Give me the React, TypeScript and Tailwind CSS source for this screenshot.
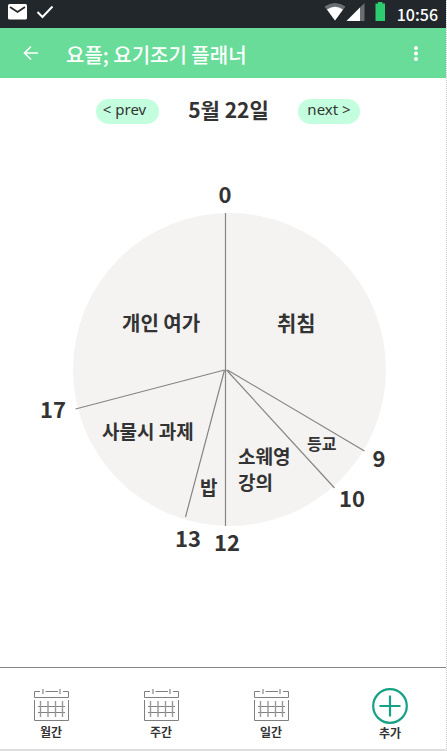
import React from "react";

const spokes = [
  { hour: "0", x: 189, y: 33, fromX: 189, tx: 189, ty: 23 },
  { hour: "9", x: 328, y: 271, fromX: 191, tx: 343, ty: 287 },
  { hour: "10", x: 298, y: 308, fromX: 190, tx: 316, ty: 327 },
  { hour: "12", x: 189, y: 346, fromX: 189, tx: 191, ty: 371 },
  { hour: "13", x: 149, y: 337, fromX: 188, tx: 152, ty: 367 },
  { hour: "17", x: 39, y: 229, fromX: 188, tx: 17, ty: 238 },
];

const plans = [
  { lines: ["취침"], x: 241, y: 151, size: "text-[21px]" },
  { lines: ["등교"], x: 271, y: 270, size: "text-[16px]" },
  { lines: ["소웨영", "강의"], x: 202, y: 284, size: "text-[19px]" },
  { lines: ["밥"], x: 164, y: 315, size: "text-[19px]" },
  { lines: ["사물시 과제"], x: 66, y: 259, size: "text-[19px]" },
  { lines: ["개인 여가"], x: 86, y: 151, size: "text-[20px]" },
];

function DayChart() {
  return (
    <svg viewBox="0 0 375 376" className="block w-[375px] max-w-full overflow-visible fill-[#333333]" role="img" aria-label="5월 22일 시간표">
      <circle cx="193.5" cy="189.5" r="156.5" fill="#f4f3f2" />
      {spokes.map((s) => (
        <line key={s.hour} x1={s.fromX + 0.5} y1="190" x2={s.x + 0.5} y2={s.y} stroke="#858585" strokeWidth="1.2" />
      ))}
      {spokes.map((s) => (
        <text key={s.hour} x={s.tx} y={s.ty} textAnchor="middle" className="text-[22px] font-bold">
          {s.hour}
        </text>
      ))}
      {plans.map((p) =>
        p.lines.map((line, i) => (
          <text key={line} x={p.x} y={p.y + i * 26} className={`${p.size} font-bold`}>
            {line}
          </text>
        )),
      )}
    </svg>
  );
}

function CalendarIcon() {
  return (
    <svg viewBox="0 0 36 33" className="h-[33px] w-9" fill="none" stroke="#808080" strokeWidth="1" aria-hidden="true">
      <path d="M6 3.5H0.5V9.5H34.5V3.5H29M11.5 3.5H24" />
      <path d="M9 1V6M26 1V6" strokeWidth="1.4" stroke="#999999" />
      <path d="M0.5 12V32.5H34.5V12" />
      <path d="M4 18.5H31M4 24.5H31" />
      <path d="M6.5 13V29M14 13V29M21.5 13V29M28.5 13V29" strokeWidth="1.4" stroke="#999999" />
    </svg>
  );
}

function AddIcon() {
  return (
    <svg viewBox="0 0 36 36" className="h-9 w-9" fill="none" stroke="#16a085" aria-hidden="true">
      <circle cx="18" cy="18" r="16.8" strokeWidth="2.2" />
      <path d="M18 7.5V28.5M7.5 18H28.5" strokeWidth="2.2" />
    </svg>
  );
}

function StatusBar() {
  return (
    <div className="flex h-7 items-center bg-[#22272b] px-2 text-white">
      <svg viewBox="0 0 48 20" className="h-5 w-12" role="img" aria-label="알림">
        <rect x="0" y="0" width="19" height="15.5" rx="1.5" fill="#fff" />
        <path d="M2 3L9.5 8L17 3" fill="none" stroke="#22272b" strokeWidth="1.8" />
        <path d="M29.5 8L34.5 13L44.5 2.5" fill="none" stroke="#fff" strokeWidth="2" />
      </svg>
      <svg viewBox="0 -4 64 28" className="ml-auto h-7 w-16" role="img" aria-label="와이파이, 신호, 배터리">
        <path d="M0.5 2.5Q11 -4.5 21.5 2.5L11 16.5Z" fill="#6b6f72" />
        <path d="M3 5.5Q11 0 19 5.5L11 16.5Z" fill="#fff" />
        <path d="M40.5 -1V17H22.5Z" fill="#6b6f72" />
        <path d="M36 3.5V17H22.5Z" fill="#fff" />
        <path d="M54 -2H58.5V-0.5H61V17H51.5V-0.5H54Z" fill="#2ecc71" />
      </svg>
      <time className="ml-2 w-[42px] text-right text-[16px] leading-6 font-medium">10:56</time>
    </div>
  );
}

export default function App() {
  return (
    <div className="flex min-h-screen flex-col border-r border-b-2 border-r-[#cccccc] border-b-[#dddddd] bg-white font-['Noto_Sans_CJK_KR',sans-serif] text-[#333333] [border-right-style:dotted]">
      <StatusBar />
      <header className="flex h-[50px] items-center bg-[#69dc99] px-5 text-white">
        <button aria-label="뒤로" className="flex h-8 w-6 items-center">
          <svg viewBox="0 0 24 24" className="h-6 w-6" fill="none" stroke="#fff" strokeWidth="1.6" aria-hidden="true">
            <path d="M18 12H4.5M11 5.5L4.5 12L11 18.5" />
          </svg>
        </button>
        <h1 className="mt-1 ml-[22px] text-[20px] leading-8 font-medium">요플; 요기조기 플래너</h1>
        <button aria-label="메뉴" className="ml-auto flex h-8 w-5 items-center justify-center">
          <svg viewBox="0 0 4 16" className="h-4 w-1" fill="#fff" aria-hidden="true">
            <circle cx="2" cy="3" r="2" />
            <circle cx="2" cy="8.5" r="2" />
            <circle cx="2" cy="14" r="2" />
          </svg>
        </button>
      </header>

      <main className="flex flex-1 flex-col items-center">
        <div className="mt-[15px] flex h-8 w-full items-center justify-center gap-7 pl-2.5">
          <button className="mt-1 h-[25px] w-[63px] rounded-full bg-[#c3ffde] pr-1.5 pb-1 text-[15px] leading-5 font-['Noto_Sans',sans-serif]">&lt; prev</button>
          <h2 className="w-[83px] text-center text-[21px] leading-8 font-bold whitespace-nowrap">5월 22일</h2>
          <button className="mt-1 h-[25px] w-[62px] rounded-full bg-[#c3ffde] pb-1 text-[15px] leading-5 font-['Noto_Sans',sans-serif]">next &gt;</button>
        </div>
        <div className="mt-[55px] flex w-full justify-center">
          <DayChart />
        </div>
      </main>

      <nav className="flex h-[82px] items-start gap-[74px] border-t border-[#858585] pr-[38px] pl-[34px] text-[12px] font-bold">
        {["월간", "주간", "일간"].map((label) => (
          <button key={label} className="mt-5 flex w-9 flex-col items-center">
            <CalendarIcon />
            <span className="pr-0.5 leading-[22px]">{label}</span>
          </button>
        ))}
        <button className="mt-5 ml-auto flex w-9 flex-col items-center">
          <AddIcon />
          <span className="leading-[18px]">추가</span>
        </button>
      </nav>
    </div>
  );
}
